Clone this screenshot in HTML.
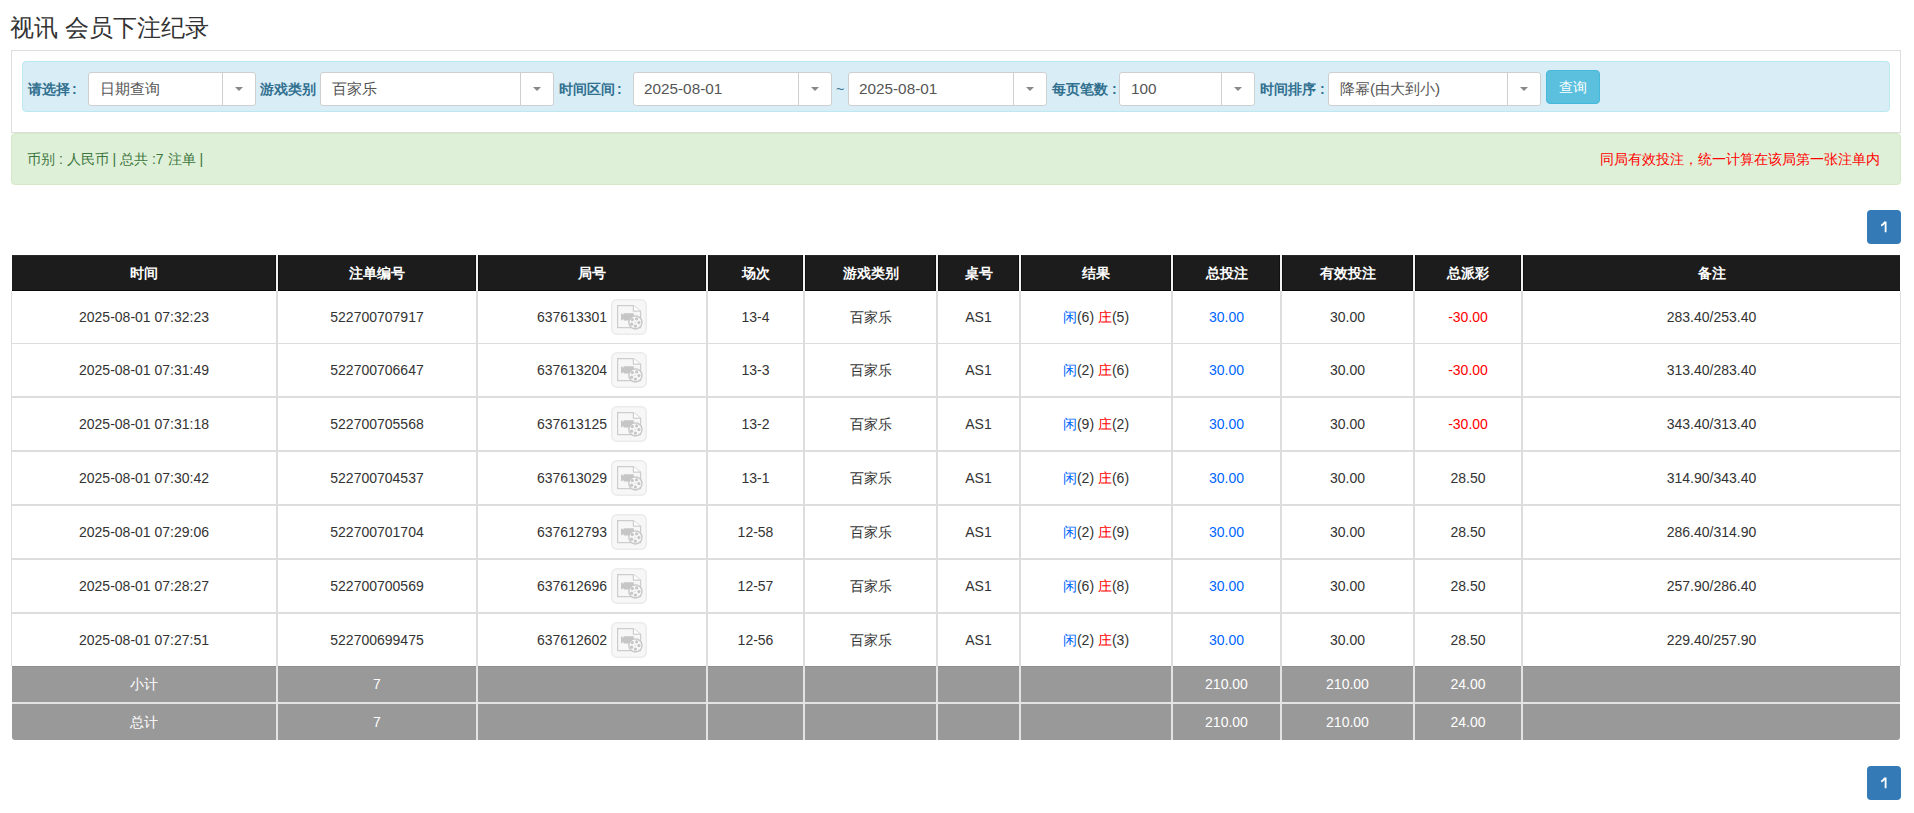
<!DOCTYPE html>
<html><head><meta charset="utf-8"><title>视讯 会员下注纪录</title>
<style>
*{box-sizing:border-box;margin:0;padding:0}
html,body{width:1914px;height:813px;overflow:hidden;background:#fff}
body{font-family:"Liberation Sans",sans-serif;color:#333;font-size:14px;position:relative}
.abs{position:absolute}
.title{left:10px;top:14px;font-size:24px;line-height:28px;color:#333;white-space:nowrap}
.panel{left:11px;top:50px;width:1890px;height:83px;border:1px solid #ddd;background:#fff}
.info{left:22px;top:61px;width:1868px;height:51px;background:#d9edf7;border:1px solid #bce8f1;border-radius:4px}
.lbl{top:72px;height:34px;line-height:34px;font-size:14px;font-weight:bold;color:#31708f;white-space:nowrap}
.sel{top:72px;height:34px;background:#fff;border:1px solid #cfcfcf;border-radius:3px}
.sel .tx{position:absolute;left:11px;top:0;height:32px;line-height:32px;font-size:15.3px;color:#555;white-space:nowrap}
.sel .dv{position:absolute;top:0;bottom:0;width:1px;background:#cfcfcf}
.sel .ar{position:absolute;top:14px;width:0;height:0;border-left:4px solid transparent;border-right:4px solid transparent;border-top:4px solid #888}
.btn{left:1546px;top:70px;width:54px;height:34px;background:#5bc0de;border:1px solid #46b8da;border-radius:4px;color:#fff;font-size:14px;line-height:32px;text-align:center}
.alert{left:11px;top:133px;width:1890px;height:52px;background:#dff0d8;border:1px solid #d6e9c6;border-radius:4px}
.atx{top:133px;height:52px;line-height:52px;font-size:14px;color:#3c763d;white-space:nowrap}
.pg{left:1867px;width:34px;height:34px;background:#337ab7;border-radius:4px;color:#fff;font-size:14px;line-height:34px;text-align:center}
.th{top:255px;height:36px;background:#1c1c1c;box-shadow:inset 0 1px #282828,inset 0 -1px #0c0c0c}
.hc{top:255px;height:36px;line-height:36px;color:#fff;font-weight:bold;font-size:14px;text-align:center;white-space:nowrap}
.c{height:52px;line-height:52px;text-align:center;white-space:nowrap;font-size:14px;color:#333}
.g{background:#999}
.gc{line-height:36px;height:36px;color:#fff;text-align:center;font-size:14px;white-space:nowrap}
.ic{vertical-align:middle;position:relative;top:-1px}
.bl{color:#0066ff}.rd{color:#ff0000}
</style></head><body>

<div class="abs title">视讯 会员下注纪录</div>
<div class="abs panel"></div><div class="abs info"></div>
<div class="abs lbl" style="left:28px">请选择<span style="margin-left:2px">:</span></div>
<div class="abs sel" style="left:88px;width:168px"><span class="tx">日期查询</span><i class="dv" style="left:133px"></i><i class="ar" style="left:146.0px"></i></div>
<div class="abs lbl" style="left:260px">游戏类别</div>
<div class="abs sel" style="left:320px;width:234px"><span class="tx">百家乐</span><i class="dv" style="left:199px"></i><i class="ar" style="left:212.0px"></i></div>
<div class="abs lbl" style="left:559px">时间区间<span style="margin-left:2px">:</span></div>
<div class="abs sel" style="left:633px;width:199px"><span class="tx"><span style="margin-left:-1px">2025-08-01</span></span><i class="dv" style="left:164px"></i><i class="ar" style="left:177.0px"></i></div>
<div class="abs lbl" style="left:836px;font-weight:normal">~</div>
<div class="abs sel" style="left:848px;width:199px"><span class="tx"><span style="margin-left:-1px">2025-08-01</span></span><i class="dv" style="left:164px"></i><i class="ar" style="left:177.0px"></i></div>
<div class="abs lbl" style="left:1052px">每页笔数 :</div>
<div class="abs sel" style="left:1119px;width:136px"><span class="tx">100</span><i class="dv" style="left:101px"></i><i class="ar" style="left:114.0px"></i></div>
<div class="abs lbl" style="left:1260px">时间排序 :</div>
<div class="abs sel" style="left:1328px;width:213px"><span class="tx">降幂(由大到小)</span><i class="dv" style="left:178px"></i><i class="ar" style="left:191.0px"></i></div>
<div class="abs btn">查询</div>
<div class="abs alert"></div>
<div class="abs atx" style="left:27px">币别 : 人民币 | 总共 :7 注单 |</div>
<div class="abs atx" style="left:1600px;color:#ff0000">同局有效投注，统一计算在该局第一张注单内</div>
<div class="abs pg" style="top:210px"><svg width="34" height="34" viewBox="0 0 34 34" style="display:block"><path d="M14.2 15.6C15.9 14.8 17.0 13.6 17.6 12.4H18.6V22.2" fill="none" stroke="#fff" stroke-width="1.8"/></svg></div>
<div class="abs pg" style="top:766px"><svg width="34" height="34" viewBox="0 0 34 34" style="display:block"><path d="M14.2 15.6C15.9 14.8 17.0 13.6 17.6 12.4H18.6V22.2" fill="none" stroke="#fff" stroke-width="1.8"/></svg></div>
<div class="abs th" style="left:12px;width:1888px"></div>
<div class="abs hc" style="left:12px;width:264px">时间</div>
<div class="abs hc" style="left:278px;width:198px">注单编号</div>
<div class="abs hc" style="left:478px;width:228px">局号</div>
<div class="abs hc" style="left:708px;width:95px">场次</div>
<div class="abs hc" style="left:805px;width:131px">游戏类别</div>
<div class="abs hc" style="left:938px;width:81px">桌号</div>
<div class="abs hc" style="left:1021px;width:150px">结果</div>
<div class="abs hc" style="left:1173px;width:107px">总投注</div>
<div class="abs hc" style="left:1282px;width:131px">有效投注</div>
<div class="abs hc" style="left:1415px;width:106px">总派彩</div>
<div class="abs hc" style="left:1523px;width:377px">备注</div>
<div class="abs" style="left:276px;top:255px;width:2px;height:36px;background:#f2f2f2;box-shadow:-1px 0 #101010,1px 0 #101010"></div>
<div class="abs" style="left:476px;top:255px;width:2px;height:36px;background:#f2f2f2;box-shadow:-1px 0 #101010,1px 0 #101010"></div>
<div class="abs" style="left:706px;top:255px;width:2px;height:36px;background:#f2f2f2;box-shadow:-1px 0 #101010,1px 0 #101010"></div>
<div class="abs" style="left:803px;top:255px;width:2px;height:36px;background:#f2f2f2;box-shadow:-1px 0 #101010,1px 0 #101010"></div>
<div class="abs" style="left:936px;top:255px;width:2px;height:36px;background:#f2f2f2;box-shadow:-1px 0 #101010,1px 0 #101010"></div>
<div class="abs" style="left:1019px;top:255px;width:2px;height:36px;background:#f2f2f2;box-shadow:-1px 0 #101010,1px 0 #101010"></div>
<div class="abs" style="left:1171px;top:255px;width:2px;height:36px;background:#f2f2f2;box-shadow:-1px 0 #101010,1px 0 #101010"></div>
<div class="abs" style="left:1280px;top:255px;width:2px;height:36px;background:#f2f2f2;box-shadow:-1px 0 #101010,1px 0 #101010"></div>
<div class="abs" style="left:1413px;top:255px;width:2px;height:36px;background:#f2f2f2;box-shadow:-1px 0 #101010,1px 0 #101010"></div>
<div class="abs" style="left:1521px;top:255px;width:2px;height:36px;background:#f2f2f2;box-shadow:-1px 0 #101010,1px 0 #101010"></div>
<div class="abs" style="left:11px;top:291px;width:1px;height:375px;background:#ddd"></div>
<div class="abs" style="left:1900px;top:291px;width:1px;height:375px;background:#ddd"></div>
<div class="abs" style="left:276px;top:291px;width:2px;height:375px;background:#ddd"></div>
<div class="abs" style="left:476px;top:291px;width:2px;height:375px;background:#ddd"></div>
<div class="abs" style="left:706px;top:291px;width:2px;height:375px;background:#ddd"></div>
<div class="abs" style="left:803px;top:291px;width:2px;height:375px;background:#ddd"></div>
<div class="abs" style="left:936px;top:291px;width:2px;height:375px;background:#ddd"></div>
<div class="abs" style="left:1019px;top:291px;width:2px;height:375px;background:#ddd"></div>
<div class="abs" style="left:1171px;top:291px;width:2px;height:375px;background:#ddd"></div>
<div class="abs" style="left:1280px;top:291px;width:2px;height:375px;background:#ddd"></div>
<div class="abs" style="left:1413px;top:291px;width:2px;height:375px;background:#ddd"></div>
<div class="abs" style="left:1521px;top:291px;width:2px;height:375px;background:#ddd"></div>
<div class="abs" style="left:12px;top:343px;width:1888px;height:1px;background:#ddd"></div>
<div class="abs" style="left:12px;top:396px;width:1888px;height:2px;background:#ddd"></div>
<div class="abs" style="left:12px;top:450px;width:1888px;height:2px;background:#ddd"></div>
<div class="abs" style="left:12px;top:504px;width:1888px;height:2px;background:#ddd"></div>
<div class="abs" style="left:12px;top:558px;width:1888px;height:2px;background:#ddd"></div>
<div class="abs" style="left:12px;top:612px;width:1888px;height:2px;background:#ddd"></div>
<div class="abs c" style="left:12px;top:291px;width:264px">2025-08-01 07:32:23</div>
<div class="abs c" style="left:278px;top:291px;width:198px">522700707917</div>
<div class="abs c" style="left:478px;top:291px;width:228px">637613301 <svg class="ic" width="36" height="36" viewBox="0 0 36 36"><rect x="0.75" y="0.75" width="34.5" height="34.5" rx="5" fill="#f7f7f7" stroke="#ebebeb" stroke-width="1.5"/><path d="M6.6 6.6H22.4L29.6 12.2V28.6H6.6Z" fill="#f7f7f7" stroke="#cdcdcd" stroke-width="1.2"/><path d="M22.4 6.6V12.2H29.6" fill="#fff" stroke="#cdcdcd" stroke-width="1.2"/><path d="M10 14.2L12.6 15.8V14.2H22.8V21.6H12.6V20.0L10 21.6Z" fill="#c6c6c6"/><circle cx="24.4" cy="23.4" r="6.6" fill="#f7f7f7" stroke="#c6c6c6" stroke-width="1.3"/><circle cx="21.3" cy="20.6" r="1.6" fill="#c6c6c6"/><circle cx="25.6" cy="19.8" r="1.6" fill="#c6c6c6"/><circle cx="27.9" cy="23.6" r="1.6" fill="#c6c6c6"/><circle cx="24.4" cy="27.1" r="1.6" fill="#c6c6c6"/><circle cx="20.6" cy="25.2" r="1.6" fill="#c6c6c6"/><circle cx="24" cy="23.5" r="0.6" fill="#c6c6c6"/></svg></div>
<div class="abs c" style="left:708px;top:291px;width:95px">13-4</div>
<div class="abs c" style="left:805px;top:291px;width:131px">百家乐</div>
<div class="abs c" style="left:938px;top:291px;width:81px">AS1</div>
<div class="abs c" style="left:1021px;top:291px;width:150px"><span class="bl">闲</span>(6) <span class="rd">庄</span>(5)</div>
<div class="abs c" style="left:1173px;top:291px;width:107px"><span class="bl">30.00</span></div>
<div class="abs c" style="left:1282px;top:291px;width:131px">30.00</div>
<div class="abs c" style="left:1415px;top:291px;width:106px"><span class="rd">-30.00</span></div>
<div class="abs c" style="left:1523px;top:291px;width:377px">283.40/253.40</div>
<div class="abs c" style="left:12px;top:344px;width:264px">2025-08-01 07:31:49</div>
<div class="abs c" style="left:278px;top:344px;width:198px">522700706647</div>
<div class="abs c" style="left:478px;top:344px;width:228px">637613204 <svg class="ic" width="36" height="36" viewBox="0 0 36 36"><rect x="0.75" y="0.75" width="34.5" height="34.5" rx="5" fill="#f7f7f7" stroke="#ebebeb" stroke-width="1.5"/><path d="M6.6 6.6H22.4L29.6 12.2V28.6H6.6Z" fill="#f7f7f7" stroke="#cdcdcd" stroke-width="1.2"/><path d="M22.4 6.6V12.2H29.6" fill="#fff" stroke="#cdcdcd" stroke-width="1.2"/><path d="M10 14.2L12.6 15.8V14.2H22.8V21.6H12.6V20.0L10 21.6Z" fill="#c6c6c6"/><circle cx="24.4" cy="23.4" r="6.6" fill="#f7f7f7" stroke="#c6c6c6" stroke-width="1.3"/><circle cx="21.3" cy="20.6" r="1.6" fill="#c6c6c6"/><circle cx="25.6" cy="19.8" r="1.6" fill="#c6c6c6"/><circle cx="27.9" cy="23.6" r="1.6" fill="#c6c6c6"/><circle cx="24.4" cy="27.1" r="1.6" fill="#c6c6c6"/><circle cx="20.6" cy="25.2" r="1.6" fill="#c6c6c6"/><circle cx="24" cy="23.5" r="0.6" fill="#c6c6c6"/></svg></div>
<div class="abs c" style="left:708px;top:344px;width:95px">13-3</div>
<div class="abs c" style="left:805px;top:344px;width:131px">百家乐</div>
<div class="abs c" style="left:938px;top:344px;width:81px">AS1</div>
<div class="abs c" style="left:1021px;top:344px;width:150px"><span class="bl">闲</span>(2) <span class="rd">庄</span>(6)</div>
<div class="abs c" style="left:1173px;top:344px;width:107px"><span class="bl">30.00</span></div>
<div class="abs c" style="left:1282px;top:344px;width:131px">30.00</div>
<div class="abs c" style="left:1415px;top:344px;width:106px"><span class="rd">-30.00</span></div>
<div class="abs c" style="left:1523px;top:344px;width:377px">313.40/283.40</div>
<div class="abs c" style="left:12px;top:398px;width:264px">2025-08-01 07:31:18</div>
<div class="abs c" style="left:278px;top:398px;width:198px">522700705568</div>
<div class="abs c" style="left:478px;top:398px;width:228px">637613125 <svg class="ic" width="36" height="36" viewBox="0 0 36 36"><rect x="0.75" y="0.75" width="34.5" height="34.5" rx="5" fill="#f7f7f7" stroke="#ebebeb" stroke-width="1.5"/><path d="M6.6 6.6H22.4L29.6 12.2V28.6H6.6Z" fill="#f7f7f7" stroke="#cdcdcd" stroke-width="1.2"/><path d="M22.4 6.6V12.2H29.6" fill="#fff" stroke="#cdcdcd" stroke-width="1.2"/><path d="M10 14.2L12.6 15.8V14.2H22.8V21.6H12.6V20.0L10 21.6Z" fill="#c6c6c6"/><circle cx="24.4" cy="23.4" r="6.6" fill="#f7f7f7" stroke="#c6c6c6" stroke-width="1.3"/><circle cx="21.3" cy="20.6" r="1.6" fill="#c6c6c6"/><circle cx="25.6" cy="19.8" r="1.6" fill="#c6c6c6"/><circle cx="27.9" cy="23.6" r="1.6" fill="#c6c6c6"/><circle cx="24.4" cy="27.1" r="1.6" fill="#c6c6c6"/><circle cx="20.6" cy="25.2" r="1.6" fill="#c6c6c6"/><circle cx="24" cy="23.5" r="0.6" fill="#c6c6c6"/></svg></div>
<div class="abs c" style="left:708px;top:398px;width:95px">13-2</div>
<div class="abs c" style="left:805px;top:398px;width:131px">百家乐</div>
<div class="abs c" style="left:938px;top:398px;width:81px">AS1</div>
<div class="abs c" style="left:1021px;top:398px;width:150px"><span class="bl">闲</span>(9) <span class="rd">庄</span>(2)</div>
<div class="abs c" style="left:1173px;top:398px;width:107px"><span class="bl">30.00</span></div>
<div class="abs c" style="left:1282px;top:398px;width:131px">30.00</div>
<div class="abs c" style="left:1415px;top:398px;width:106px"><span class="rd">-30.00</span></div>
<div class="abs c" style="left:1523px;top:398px;width:377px">343.40/313.40</div>
<div class="abs c" style="left:12px;top:452px;width:264px">2025-08-01 07:30:42</div>
<div class="abs c" style="left:278px;top:452px;width:198px">522700704537</div>
<div class="abs c" style="left:478px;top:452px;width:228px">637613029 <svg class="ic" width="36" height="36" viewBox="0 0 36 36"><rect x="0.75" y="0.75" width="34.5" height="34.5" rx="5" fill="#f7f7f7" stroke="#ebebeb" stroke-width="1.5"/><path d="M6.6 6.6H22.4L29.6 12.2V28.6H6.6Z" fill="#f7f7f7" stroke="#cdcdcd" stroke-width="1.2"/><path d="M22.4 6.6V12.2H29.6" fill="#fff" stroke="#cdcdcd" stroke-width="1.2"/><path d="M10 14.2L12.6 15.8V14.2H22.8V21.6H12.6V20.0L10 21.6Z" fill="#c6c6c6"/><circle cx="24.4" cy="23.4" r="6.6" fill="#f7f7f7" stroke="#c6c6c6" stroke-width="1.3"/><circle cx="21.3" cy="20.6" r="1.6" fill="#c6c6c6"/><circle cx="25.6" cy="19.8" r="1.6" fill="#c6c6c6"/><circle cx="27.9" cy="23.6" r="1.6" fill="#c6c6c6"/><circle cx="24.4" cy="27.1" r="1.6" fill="#c6c6c6"/><circle cx="20.6" cy="25.2" r="1.6" fill="#c6c6c6"/><circle cx="24" cy="23.5" r="0.6" fill="#c6c6c6"/></svg></div>
<div class="abs c" style="left:708px;top:452px;width:95px">13-1</div>
<div class="abs c" style="left:805px;top:452px;width:131px">百家乐</div>
<div class="abs c" style="left:938px;top:452px;width:81px">AS1</div>
<div class="abs c" style="left:1021px;top:452px;width:150px"><span class="bl">闲</span>(2) <span class="rd">庄</span>(6)</div>
<div class="abs c" style="left:1173px;top:452px;width:107px"><span class="bl">30.00</span></div>
<div class="abs c" style="left:1282px;top:452px;width:131px">30.00</div>
<div class="abs c" style="left:1415px;top:452px;width:106px">28.50</div>
<div class="abs c" style="left:1523px;top:452px;width:377px">314.90/343.40</div>
<div class="abs c" style="left:12px;top:506px;width:264px">2025-08-01 07:29:06</div>
<div class="abs c" style="left:278px;top:506px;width:198px">522700701704</div>
<div class="abs c" style="left:478px;top:506px;width:228px">637612793 <svg class="ic" width="36" height="36" viewBox="0 0 36 36"><rect x="0.75" y="0.75" width="34.5" height="34.5" rx="5" fill="#f7f7f7" stroke="#ebebeb" stroke-width="1.5"/><path d="M6.6 6.6H22.4L29.6 12.2V28.6H6.6Z" fill="#f7f7f7" stroke="#cdcdcd" stroke-width="1.2"/><path d="M22.4 6.6V12.2H29.6" fill="#fff" stroke="#cdcdcd" stroke-width="1.2"/><path d="M10 14.2L12.6 15.8V14.2H22.8V21.6H12.6V20.0L10 21.6Z" fill="#c6c6c6"/><circle cx="24.4" cy="23.4" r="6.6" fill="#f7f7f7" stroke="#c6c6c6" stroke-width="1.3"/><circle cx="21.3" cy="20.6" r="1.6" fill="#c6c6c6"/><circle cx="25.6" cy="19.8" r="1.6" fill="#c6c6c6"/><circle cx="27.9" cy="23.6" r="1.6" fill="#c6c6c6"/><circle cx="24.4" cy="27.1" r="1.6" fill="#c6c6c6"/><circle cx="20.6" cy="25.2" r="1.6" fill="#c6c6c6"/><circle cx="24" cy="23.5" r="0.6" fill="#c6c6c6"/></svg></div>
<div class="abs c" style="left:708px;top:506px;width:95px">12-58</div>
<div class="abs c" style="left:805px;top:506px;width:131px">百家乐</div>
<div class="abs c" style="left:938px;top:506px;width:81px">AS1</div>
<div class="abs c" style="left:1021px;top:506px;width:150px"><span class="bl">闲</span>(2) <span class="rd">庄</span>(9)</div>
<div class="abs c" style="left:1173px;top:506px;width:107px"><span class="bl">30.00</span></div>
<div class="abs c" style="left:1282px;top:506px;width:131px">30.00</div>
<div class="abs c" style="left:1415px;top:506px;width:106px">28.50</div>
<div class="abs c" style="left:1523px;top:506px;width:377px">286.40/314.90</div>
<div class="abs c" style="left:12px;top:560px;width:264px">2025-08-01 07:28:27</div>
<div class="abs c" style="left:278px;top:560px;width:198px">522700700569</div>
<div class="abs c" style="left:478px;top:560px;width:228px">637612696 <svg class="ic" width="36" height="36" viewBox="0 0 36 36"><rect x="0.75" y="0.75" width="34.5" height="34.5" rx="5" fill="#f7f7f7" stroke="#ebebeb" stroke-width="1.5"/><path d="M6.6 6.6H22.4L29.6 12.2V28.6H6.6Z" fill="#f7f7f7" stroke="#cdcdcd" stroke-width="1.2"/><path d="M22.4 6.6V12.2H29.6" fill="#fff" stroke="#cdcdcd" stroke-width="1.2"/><path d="M10 14.2L12.6 15.8V14.2H22.8V21.6H12.6V20.0L10 21.6Z" fill="#c6c6c6"/><circle cx="24.4" cy="23.4" r="6.6" fill="#f7f7f7" stroke="#c6c6c6" stroke-width="1.3"/><circle cx="21.3" cy="20.6" r="1.6" fill="#c6c6c6"/><circle cx="25.6" cy="19.8" r="1.6" fill="#c6c6c6"/><circle cx="27.9" cy="23.6" r="1.6" fill="#c6c6c6"/><circle cx="24.4" cy="27.1" r="1.6" fill="#c6c6c6"/><circle cx="20.6" cy="25.2" r="1.6" fill="#c6c6c6"/><circle cx="24" cy="23.5" r="0.6" fill="#c6c6c6"/></svg></div>
<div class="abs c" style="left:708px;top:560px;width:95px">12-57</div>
<div class="abs c" style="left:805px;top:560px;width:131px">百家乐</div>
<div class="abs c" style="left:938px;top:560px;width:81px">AS1</div>
<div class="abs c" style="left:1021px;top:560px;width:150px"><span class="bl">闲</span>(6) <span class="rd">庄</span>(8)</div>
<div class="abs c" style="left:1173px;top:560px;width:107px"><span class="bl">30.00</span></div>
<div class="abs c" style="left:1282px;top:560px;width:131px">30.00</div>
<div class="abs c" style="left:1415px;top:560px;width:106px">28.50</div>
<div class="abs c" style="left:1523px;top:560px;width:377px">257.90/286.40</div>
<div class="abs c" style="left:12px;top:614px;width:264px">2025-08-01 07:27:51</div>
<div class="abs c" style="left:278px;top:614px;width:198px">522700699475</div>
<div class="abs c" style="left:478px;top:614px;width:228px">637612602 <svg class="ic" width="36" height="36" viewBox="0 0 36 36"><rect x="0.75" y="0.75" width="34.5" height="34.5" rx="5" fill="#f7f7f7" stroke="#ebebeb" stroke-width="1.5"/><path d="M6.6 6.6H22.4L29.6 12.2V28.6H6.6Z" fill="#f7f7f7" stroke="#cdcdcd" stroke-width="1.2"/><path d="M22.4 6.6V12.2H29.6" fill="#fff" stroke="#cdcdcd" stroke-width="1.2"/><path d="M10 14.2L12.6 15.8V14.2H22.8V21.6H12.6V20.0L10 21.6Z" fill="#c6c6c6"/><circle cx="24.4" cy="23.4" r="6.6" fill="#f7f7f7" stroke="#c6c6c6" stroke-width="1.3"/><circle cx="21.3" cy="20.6" r="1.6" fill="#c6c6c6"/><circle cx="25.6" cy="19.8" r="1.6" fill="#c6c6c6"/><circle cx="27.9" cy="23.6" r="1.6" fill="#c6c6c6"/><circle cx="24.4" cy="27.1" r="1.6" fill="#c6c6c6"/><circle cx="20.6" cy="25.2" r="1.6" fill="#c6c6c6"/><circle cx="24" cy="23.5" r="0.6" fill="#c6c6c6"/></svg></div>
<div class="abs c" style="left:708px;top:614px;width:95px">12-56</div>
<div class="abs c" style="left:805px;top:614px;width:131px">百家乐</div>
<div class="abs c" style="left:938px;top:614px;width:81px">AS1</div>
<div class="abs c" style="left:1021px;top:614px;width:150px"><span class="bl">闲</span>(2) <span class="rd">庄</span>(3)</div>
<div class="abs c" style="left:1173px;top:614px;width:107px"><span class="bl">30.00</span></div>
<div class="abs c" style="left:1282px;top:614px;width:131px">30.00</div>
<div class="abs c" style="left:1415px;top:614px;width:106px">28.50</div>
<div class="abs c" style="left:1523px;top:614px;width:377px">229.40/257.90</div>
<div class="abs g" style="left:12px;top:666px;width:1888px;height:36px;box-shadow:inset 0 1px #8e8e8e;"></div>
<div class="abs gc" style="left:12px;top:666px;width:264px">小计</div>
<div class="abs gc" style="left:278px;top:666px;width:198px">7</div>
<div class="abs gc" style="left:1173px;top:666px;width:107px">210.00</div>
<div class="abs gc" style="left:1282px;top:666px;width:131px">210.00</div>
<div class="abs gc" style="left:1415px;top:666px;width:106px">24.00</div>
<div class="abs g" style="left:12px;top:704px;width:1888px;height:36px;border-radius:0 0 3px 3px;"></div>
<div class="abs gc" style="left:12px;top:704px;width:264px">总计</div>
<div class="abs gc" style="left:278px;top:704px;width:198px">7</div>
<div class="abs gc" style="left:1173px;top:704px;width:107px">210.00</div>
<div class="abs gc" style="left:1282px;top:704px;width:131px">210.00</div>
<div class="abs gc" style="left:1415px;top:704px;width:106px">24.00</div>
<div class="abs" style="left:276px;top:666px;width:2px;height:74px;background:#e3e3e3"></div>
<div class="abs" style="left:476px;top:666px;width:2px;height:74px;background:#e3e3e3"></div>
<div class="abs" style="left:706px;top:666px;width:2px;height:74px;background:#e3e3e3"></div>
<div class="abs" style="left:803px;top:666px;width:2px;height:74px;background:#e3e3e3"></div>
<div class="abs" style="left:936px;top:666px;width:2px;height:74px;background:#e3e3e3"></div>
<div class="abs" style="left:1019px;top:666px;width:2px;height:74px;background:#e3e3e3"></div>
<div class="abs" style="left:1171px;top:666px;width:2px;height:74px;background:#e3e3e3"></div>
<div class="abs" style="left:1280px;top:666px;width:2px;height:74px;background:#e3e3e3"></div>
<div class="abs" style="left:1413px;top:666px;width:2px;height:74px;background:#e3e3e3"></div>
<div class="abs" style="left:1521px;top:666px;width:2px;height:74px;background:#e3e3e3"></div>
<div class="abs" style="left:12px;top:702px;width:1888px;height:2px;background:#e3e3e3"></div>
</body></html>
